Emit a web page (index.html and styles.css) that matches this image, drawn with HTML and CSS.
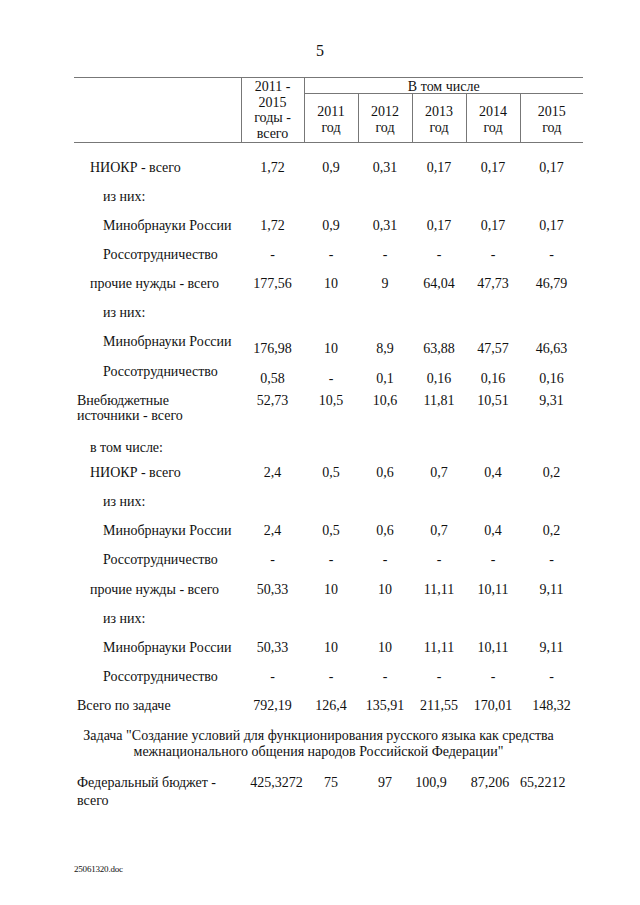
FILE: index.html
```html
<!DOCTYPE html>
<html lang="ru">
<head>
    <meta charset="utf-8"/>
    <title>25061320.doc</title>
    <link rel="stylesheet" href="styles.css">
</head>
<body>
<div class="pagenum">5</div>

<div class="sheet">
    <table class="budget">
        <colgroup>
            <col class="c-label">
            <col class="c-total">
            <col class="c-year">
            <col class="c-year">
            <col class="c-year">
            <col class="c-year">
            <col class="c-last">
        </colgroup>
        <thead>
        <tr class="h1">
            <th rowspan=2 class="blank"></th>
            <th rowspan=2 class="total">2011 -<br>2015<br>годы -<br>всего</th>
            <th colspan=5 class="incl">В том числе</th>
        </tr>
        <tr class="h2">
            <th>2011<br>год</th>
            <th>2012<br>год</th>
            <th>2013<br>год</th>
            <th>2014<br>год</th>
            <th>2015<br>год</th>
        </tr>
        </thead>
        <tbody>
        <tr class="first">
            <td class="l1">НИОКР - всего</td>
            <td>1,72</td><td>0,9</td><td>0,31</td><td>0,17</td><td>0,17</td><td>0,17</td>
        </tr>
        <tr>
            <td class="l2" colspan=7>из них:</td>
        </tr>
        <tr>
            <td class="l2">Минобрнауки России</td>
            <td>1,72</td><td>0,9</td><td>0,31</td><td>0,17</td><td>0,17</td><td>0,17</td>
        </tr>
        <tr>
            <td class="l2">Россотрудничество</td>
            <td>-</td><td>-</td><td>-</td><td>-</td><td>-</td><td>-</td>
        </tr>
        <tr>
            <td class="l1">прочие нужды - всего</td>
            <td>177,56</td><td>10</td><td>9</td><td>64,04</td><td>47,73</td><td>46,79</td>
        </tr>
        <tr>
            <td class="l2" colspan=7>из них:</td>
        </tr>
        <tr class="low">
            <td class="l2">Минобрнауки России</td>
            <td>176,98</td><td>10</td><td>8,9</td><td>63,88</td><td>47,57</td><td>46,63</td>
        </tr>
        <tr class="low">
            <td class="l2">Россотрудничество</td>
            <td>0,58</td><td>-</td><td>0,1</td><td>0,16</td><td>0,16</td><td>0,16</td>
        </tr>
        <tr class="extra">
            <td class="l0">Внебюджетные<br>источники - всего</td>
            <td>52,73</td><td>10,5</td><td>10,6</td><td>11,81</td><td>10,51</td><td>9,31</td>
        </tr>
        <tr class="short">
            <td class="l1" colspan=7>в том числе:</td>
        </tr>
        <tr>
            <td class="l1">НИОКР - всего</td>
            <td>2,4</td><td>0,5</td><td>0,6</td><td>0,7</td><td>0,4</td><td>0,2</td>
        </tr>
        <tr>
            <td class="l2" colspan=7>из них:</td>
        </tr>
        <tr>
            <td class="l2">Минобрнауки России</td>
            <td>2,4</td><td>0,5</td><td>0,6</td><td>0,7</td><td>0,4</td><td>0,2</td>
        </tr>
        <tr>
            <td class="l2">Россотрудничество</td>
            <td>-</td><td>-</td><td>-</td><td>-</td><td>-</td><td>-</td>
        </tr>
        <tr>
            <td class="l1">прочие нужды - всего</td>
            <td>50,33</td><td>10</td><td>10</td><td>11,11</td><td>10,11</td><td>9,11</td>
        </tr>
        <tr>
            <td class="l2" colspan=7>из них:</td>
        </tr>
        <tr>
            <td class="l2">Минобрнауки России</td>
            <td>50,33</td><td>10</td><td>10</td><td>11,11</td><td>10,11</td><td>9,11</td>
        </tr>
        <tr>
            <td class="l2">Россотрудничество</td>
            <td>-</td><td>-</td><td>-</td><td>-</td><td>-</td><td>-</td>
        </tr>
        <tr>
            <td class="l0">Всего по задаче</td>
            <td>792,19</td><td>126,4</td><td>135,91</td><td>211,55</td><td>170,01</td><td>148,32</td>
        </tr>
        <tr class="task">
            <td colspan=7>Задача "Создание условий для функционирования русского языка как средства<br>межнационального общения народов Российской Федерации"</td>
        </tr>
        <tr class="fed">
            <td class="l0">Федеральный бюджет -<br>всего</td>
            <td class="f1">425,3272</td><td>75</td><td>97</td><td class="f4">100,9</td><td class="f5">87,206</td><td class="f6">65,2212</td>
        </tr>
        </tbody>
    </table>

    <div class="docname">25061320.doc</div>
</div>
</body>
</html>
```

FILE: styles.css
```css
body {
    margin: 0;
    padding: 0;
    background: #fff;
    color: #111;
    font-family: "Liberation Serif", "Times New Roman", serif;
}

.pagenum {
    width: 640px;
    padding-top: 41px;
    font-size: 16px;
    line-height: 20px;
    text-align: center;
}

.sheet {
    padding: 16px 0 0 74px;
    width: 509px;
}

.budget {
    width: 509px;
    table-layout: fixed;
    border-collapse: collapse;
    font-size: 14px;
}

.c-label { width: 167px; }
.c-total { width: 63px; }
.c-year { width: 54px; }
.c-last { width: 63px; }

/* шапка */
.budget th {
    font-weight: normal;
    padding: 0;
    line-height: 15.5px;
    text-align: center;
    border-color: #777;
}

.h1 th {
    border-top: 1px solid #777;
}

.h1 {
    height: 16px;
}

.h2 {
    height: 49px;
}

.h2 th {
    line-height: 16px;
    padding-top: 4px;
    border-left: 1px solid #777;
    border-bottom: 1px solid #777;
}

.total {
    border-left: 1px solid #777;
    border-right: 1px solid #777;
    border-bottom: 1px solid #777;
    vertical-align: middle;
}

.blank {
    border-bottom: 1px solid #777;
}

.budget th.incl {
    border-bottom: 1px solid #777;
    vertical-align: top;
    line-height: 12px;
    padding-top: 3px;
}

/* строки */
.budget td {
    padding: 0;
    line-height: 16px;
    text-align: center;
    vertical-align: top;
    white-space: nowrap;
}

.budget tbody tr {
    height: 29.2px;
}

.budget tbody tr.first {
    height: 46px;
}

.first td {
    padding-top: 17px;
}

.budget td.l0,
.budget td.l1,
.budget td.l2 {
    text-align: left;
}

.budget td.l0 { padding-left: 3px; }
.budget td.l1 { padding-left: 16px; }
.budget td.l2 { padding-left: 29px; }

.low td {
    padding-top: 7px;
}

.low td.l2 {
    padding-top: 0;
}

.budget tbody tr.extra {
    height: 47px;
}

.extra td.l0 {
    line-height: 15px;
}

.budget tbody tr.short {
    height: 25px;
}

.budget tbody tr.task {
    height: 46px;
}

.task td {
    padding-right: 20px;
}

.fed td.l0 {
    line-height: 18px;
    padding-top: 0;
}

.fed td {
    padding-top: 1px;
}

.fed td.f1 { padding-left: 8px; }
.fed td.f4 { padding-right: 16px; }
.fed td.f5 { padding-right: 6px; }
.fed td.f6 { padding-right: 24px; }

.docname {
    margin-top: 54px;
    font-size: 9px;
    line-height: 11px;
    letter-spacing: -0.2px;
}
```
